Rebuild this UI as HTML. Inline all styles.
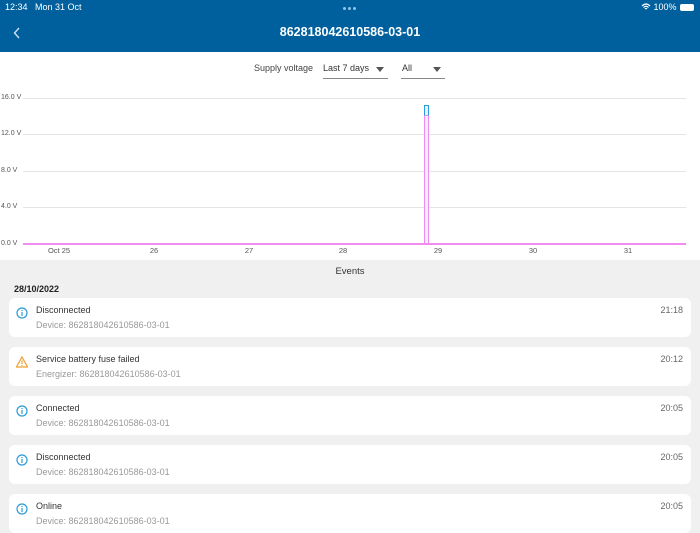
<!DOCTYPE html>
<html><head><meta charset="utf-8"><style>
*{margin:0;padding:0;box-sizing:border-box}
body{width:700px;height:525px;overflow:hidden;background:#f0f0f0;font-family:"Liberation Sans",sans-serif;position:relative}
.hdr{position:absolute;left:0;top:0;width:700px;height:52px;background:#00609e;color:#fff}
.abs{position:absolute}
.white{position:absolute;left:0;top:52px;width:700px;height:208px;background:#fff}
.card{position:absolute;left:9px;width:682px;height:39px;background:#fff;border-radius:6px}
.t1{position:absolute;left:27px;top:7px;font-size:9px;color:#333}
.t2{position:absolute;left:27px;top:22px;font-size:9px;color:#999}
.tm{position:absolute;right:8px;top:7px;font-size:9px;color:#666}
.ic{position:absolute;left:7px;top:9px}
.gl{position:absolute;left:23px;width:663px;height:1px;background:#e4e4e4}
.yl{position:absolute;left:1px;font-size:7px;color:#555}
.xl{position:absolute;top:246px;font-size:7.5px;color:#555;transform:translateX(-50%)}
</style></head><body>
<div class="hdr">
<div class="abs" style="left:5px;top:2px;font-size:9px">12:34&nbsp;&nbsp;&nbsp;Mon 31 Oct</div>
<div class="abs" style="left:343px;top:7px;width:3px;height:3px;border-radius:50%;background:#8fc3ea;box-shadow:5px 0 #8fc3ea,10px 0 #8fc3ea"></div>
<div class="abs" style="left:641px;top:2px;font-size:9px">
<svg width="10" height="8" viewBox="0 0 10 8" style="vertical-align:-1px"><path d="M1 3Q5 -1 9 3M2.5 4.5Q5 2 7.5 4.5M4 6Q5 5 6 6" stroke="#fff" stroke-width="1.2" fill="none"/></svg> 100%</div>
<div class="abs" style="left:680px;top:4px;width:14px;height:7px;background:#fff;border-radius:2px"></div>
<div class="abs" style="left:13px;top:26px"><svg width="8" height="12" viewBox="0 0 8 12"><path d="M6 1L1.5 6L6 11" stroke="#cfe0ef" stroke-width="1.4" fill="none"/></svg></div>
<div class="abs" style="left:0;width:700px;top:25px;text-align:center;font-size:12.5px;font-weight:bold">862818042610586-03-01</div>
</div>
<div class="white"></div>
<div class="abs" style="left:254px;top:63px;font-size:9px;color:#444">Supply voltage</div>
<div class="abs" style="left:323px;top:63px;font-size:9px;color:#333">Last 7 days</div>
<div class="abs" style="left:376px;top:67px;border:4px solid transparent;border-top:5px solid #555"></div>
<div class="abs" style="left:323px;top:78px;width:65px;height:1px;background:#888"></div>
<div class="abs" style="left:402px;top:63px;font-size:9px;color:#333">All</div>
<div class="abs" style="left:433px;top:67px;border:4px solid transparent;border-top:5px solid #555"></div>
<div class="abs" style="left:401px;top:78px;width:44px;height:1px;background:#888"></div>
<div class="gl" style="top:98px"></div><div class="gl" style="top:134px"></div><div class="gl" style="top:171px"></div><div class="gl" style="top:207px"></div>
<div class="yl" style="top:94px">16.0 V</div><div class="yl" style="top:130px">12.0 V</div><div class="yl" style="top:167px">8.0 V</div><div class="yl" style="top:203px">4.0 V</div><div class="yl" style="top:240px">0.0 V</div>
<div class="abs" style="left:23px;top:243px;width:663px;height:2px;background:#f08cf0"></div>
<div class="abs" style="left:424px;top:105px;width:5px;height:139px;border:1px solid #f08cf0;background:#e8f0fb"></div>
<div class="abs" style="left:424px;top:105px;width:5px;height:11px;border:1px solid #2a9be0;border-bottom-color:#f08cf0"></div>
<div class="xl" style="left:59px">Oct 25</div><div class="xl" style="left:154px">26</div><div class="xl" style="left:249px">27</div><div class="xl" style="left:343px">28</div><div class="xl" style="left:438px">29</div><div class="xl" style="left:533px">30</div><div class="xl" style="left:628px">31</div>
<div class="abs" style="left:0;width:700px;top:266px;text-align:center;font-size:9.5px;color:#333">Events</div>
<div class="abs" style="left:14px;top:284px;font-size:9px;font-weight:bold;color:#222">28/10/2022</div>
<div class="card" style="top:298px"><svg class="ic" width="12" height="12"><circle cx="6" cy="6" r="5" stroke="#2a9bd8" stroke-width="1.2" fill="none"/><path d="M6 5V9M6 3v1" stroke="#2a9bd8" stroke-width="1.2"/></svg><div class="t1">Disconnected</div><div class="t2">Device: 862818042610586-03-01</div><div class="tm">21:18</div></div>
<div class="card" style="top:347px"><svg class="ic" width="12" height="12"><path d="M6 1L11.5 11H0.5Z" stroke="#f0a030" stroke-width="1.2" fill="none"/><path d="M6 4.5V8M6 9v1" stroke="#f0a030" stroke-width="1.2"/></svg><div class="t1">Service battery fuse failed</div><div class="t2">Energizer: 862818042610586-03-01</div><div class="tm">20:12</div></div>
<div class="card" style="top:396px"><svg class="ic" width="12" height="12"><circle cx="6" cy="6" r="5" stroke="#2a9bd8" stroke-width="1.2" fill="none"/><path d="M6 5V9M6 3v1" stroke="#2a9bd8" stroke-width="1.2"/></svg><div class="t1">Connected</div><div class="t2">Device: 862818042610586-03-01</div><div class="tm">20:05</div></div>
<div class="card" style="top:445px"><svg class="ic" width="12" height="12"><circle cx="6" cy="6" r="5" stroke="#2a9bd8" stroke-width="1.2" fill="none"/><path d="M6 5V9M6 3v1" stroke="#2a9bd8" stroke-width="1.2"/></svg><div class="t1">Disconnected</div><div class="t2">Device: 862818042610586-03-01</div><div class="tm">20:05</div></div>
<div class="card" style="top:494px"><svg class="ic" width="12" height="12"><circle cx="6" cy="6" r="5" stroke="#2a9bd8" stroke-width="1.2" fill="none"/><path d="M6 5V9M6 3v1" stroke="#2a9bd8" stroke-width="1.2"/></svg><div class="t1">Online</div><div class="t2">Device: 862818042610586-03-01</div><div class="tm">20:05</div></div>
</body></html>
